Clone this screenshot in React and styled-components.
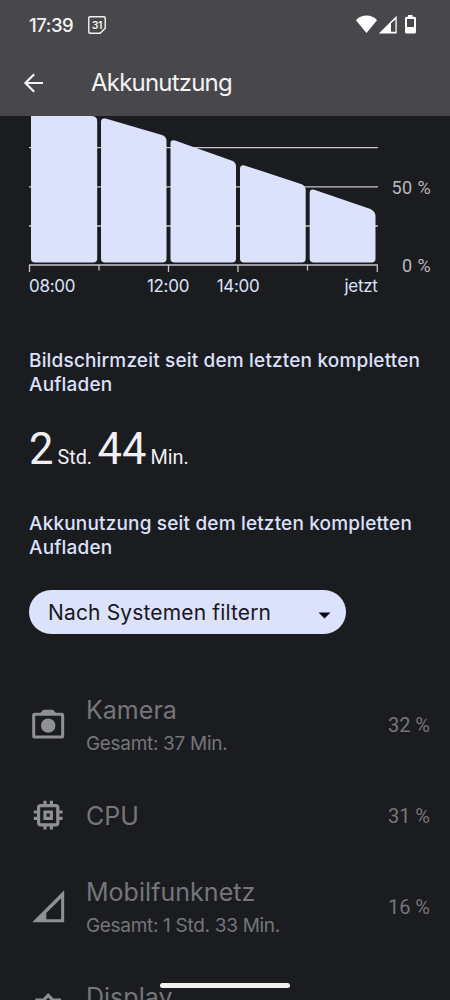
import React from "react";
import styled, { createGlobalStyle } from "styled-components";

const GlobalStyle = createGlobalStyle`
  :root {
    --bg: #1b1c20;
    --header: #48474b;
    --accent: #dce1fc;
    --muted: #75767a;
    --icon: #8f9094;
  }

  * {
    box-sizing: border-box;
  }

  body {
    margin: 0;
    background: var(--bg);
    font-family: Inter, Roboto, "Liberation Sans", sans-serif;
  }
`;

const StyledScreen = styled.div`
  position: relative;
  width: 450px;
  height: 1000px;
  overflow: hidden;
  background: var(--bg);
`;

const StyledHeader = styled.header`
  height: 116px;
  background: var(--header);
  color: #f3f3f5;
`;

const StyledStatusBar = styled.div`
  display: flex;
  align-items: center;
  height: 49px;
  padding: 0 34px 0 29px;

  svg {
    display: block;
  }
`;

const StyledClock = styled.span`
  width: 59px;
  font-size: 18.5px;
  font-weight: 500;
  letter-spacing: -0.45px;
`;

const StyledSystemIcons = styled.div`
  display: flex;
  margin-left: auto;
`;

const StyledToolbar = styled.div`
  display: flex;
  align-items: center;
  height: 67px;
  padding-left: 23px;
`;

const StyledTitle = styled.h1`
  margin: 0 0 0 47px;
  font-size: 24px;
  font-weight: 400;
  letter-spacing: -0.8px;
`;

const StyledChart = styled.svg`
  display: block;

  text {
    font-size: 17px;
    letter-spacing: -0.3px;
    fill: var(--accent);
  }

  text.percent {
    font-family: Roboto, sans-serif;
    font-size: 18px;
    letter-spacing: 0.4px;
    fill: #b9b9bf;
  }
`;

const StyledSection = styled.section`
  padding: 0 20px 0 29px;
`;

const StyledHeading = styled.h2`
  margin: ${({ $top }) => $top}px 0 0;
  color: var(--accent);
  font-size: 19px;
  font-weight: 500;
  line-height: 24px;
  letter-spacing: 0.17px;
  white-space: nowrap;
`;

const StyledDuration = styled.p`
  height: 50px;
  margin: 28px 0 0;
  color: #f0eff4;
  font-family: Roboto, sans-serif;
  font-size: 43.5px;
  line-height: 50px;
  white-space: nowrap;

  span {
    margin: 0 5.5px 0 4px;
    font-size: 19.8px;
    line-height: 1;
  }
`;

const StyledFilter = styled.button`
  display: flex;
  align-items: center;
  justify-content: space-between;
  width: 317px;
  height: 44px;
  margin-top: 30px;
  padding: 0 15px 0 19px;
  border: 0;
  border-radius: 22px;
  background: var(--accent);
  color: #17181c;
  font-family: inherit;
  font-size: 21px;
  letter-spacing: 0.15px;

  svg {
    margin-top: 7px;
  }
`;

const StyledList = styled.ul`
  margin: 38px 0 0;
  padding: 0;
  list-style: none;
`;

const StyledRow = styled.li`
  display: flex;
  align-items: center;
  height: ${({ $compact }) => ($compact ? 77 : 105)}px;
  padding: 0 20px 0 29px;
  color: var(--muted);

  > svg {
    flex: none;
    color: var(--icon);
  }
`;

const StyledRowText = styled.div`
  flex: 1;
  margin-left: 18.5px;
`;

const StyledName = styled.div`
  font-size: 25px;
  line-height: 34px;
  letter-spacing: 0.05px;
`;

const StyledTotal = styled.div`
  height: 30px;
  padding-top: 2px;
  font-size: 19px;
  line-height: 30px;
  letter-spacing: -0.3px;
`;

const StyledPercent = styled.span`
  font-family: Roboto, sans-serif;
  font-size: 20px;
`;

const StyledHomeBar = styled.div`
  position: absolute;
  left: 160px;
  bottom: 12px;
  width: 130px;
  height: 5px;
  border-radius: 3px;
  background: #f1f1ef;
`;

const RowIcon = ({ children }) => (
  <svg width='38.4' height='38.4' viewBox='0 0 24 24' fill='currentColor' fillRule='evenodd'>
    {children}
  </svg>
);

const CameraIcon = () => (
  <RowIcon>
    <path d='M9 3 7.2 4.8H3.5C2.6 4.8 2 5.4 2 6.3v13.2c0 .9.6 1.5 1.5 1.5h17c.9 0 1.5-.6 1.5-1.5V6.3c0-.9-.6-1.5-1.5-1.5h-3.7L15 3zM3.9 6.7h16.2v12.4H3.9z' />
    <circle cx='12' cy='12.9' r='4.5' />
  </RowIcon>
);

const CpuIcon = () => (
  <RowIcon>
    <path d='M15 9H9v6h6V9zm-2 4h-2v-2h2v2zm8-2V9h-2V7c0-1.100-.9-2-2-2h-2V3h-2v2h-2V3H9v2H7c-1.100 0-2 .9-2 2v2H3v2h2v2H3v2h2v2c0 1.100.9 2 2 2h2v2h2v-2h2v2h2v-2h2c1.100 0 2-.9 2-2v-2h2v-2h-2v-2h2zm-4 6H7V7h10v10z' />
  </RowIcon>
);

const NetworkIcon = () => (
  <RowIcon>
    <path d='M2 22h20V2zM20.100 20.100h-9.300v-3.800l9.300-9.300z' />
  </RowIcon>
);

const DisplayIcon = () => (
  <RowIcon>
    <path d='M20 8.690V4h-4.690L12 .690 8.690 4H4v4.690L.690 12 4 15.310V20h4.690L12 23.310 15.310 20H20v-4.690L23.310 12 20 8.690zm-2 5.790V18h-3.520L12 20.480 9.520 18H6v-3.520L3.520 12 6 9.520V6h3.520L12 3.520 14.480 6H18v3.520L20.480 12 18 14.480zM12 7a5 5 0 1 0 0 10 5 5 0 0 0 0-10z' />
  </RowIcon>
);

const bars = [
  "M31 0H91Q97.200 0 97.200 5V142.500Q97.200 146.500 93.200 146.500H35Q31 146.500 31 142.500Z",
  "M101 6Q101 1.500 105.500 2.600L162 19Q166.500 20.500 166.500 25V142.500Q166.500 146.500 162.500 146.500H105Q101 146.500 101 142.500Z",
  "M170.500 27.500Q170.500 23 175 24.500L231.500 44.500Q236 46.200 236 50.500V142.500Q236 146.500 232 146.500H174.500Q170.500 146.500 170.500 142.500Z",
  "M240 53Q240 48.500 244.500 49.500L301 68Q305.700 69.800 305.700 74V142.500Q305.700 146.500 301.700 146.500H244Q240 146.500 240 142.500Z",
  "M309.700 77Q309.700 72.500 314.200 73.700L370.500 93Q375.500 95.500 375.500 100V142.500Q375.500 146.500 371.500 146.500H313.700Q309.700 146.500 309.700 142.500Z",
];

const ticks = [
  [29.5, 156],
  [99, 154.5],
  [168.5, 156],
  [238, 156],
  [307.5, 154.5],
  [377.3, 156],
];

const BatteryChart = () => (
  <StyledChart width='450' height='184' viewBox='0 0 450 184'>
    <g stroke='#c6c6c3' strokeWidth='1.3'>
      {[31.6, 70.8, 110, 149].map((y) => (
        <line key={y} x1='29' x2='378' y1={y} y2={y} />
      ))}
      {ticks.map(([x, end]) => (
        <line key={x} x1={x} x2={x} y1='149' y2={end} />
      ))}
    </g>
    {bars.map((d) => (
      <path key={d} d={d} fill='#dce1fc' />
    ))}
    <text x='29' y='175.500'>08:00</text>
    <text x='168' y='175.500' textAnchor='middle'>12:00</text>
    <text x='238' y='175.500' textAnchor='middle'>14:00</text>
    <text x='377.500' y='175.500' textAnchor='end'>jetzt</text>
    <text className='percent' x='431' y='78' textAnchor='end'>50 %</text>
    <text className='percent' x='431' y='156' textAnchor='end'>0 %</text>
  </StyledChart>
);

const usage = [
  { name: "Kamera", total: "Gesamt: 37 Min.", percent: "32 %", Icon: CameraIcon },
  { name: "CPU", percent: "31 %", compact: true, Icon: CpuIcon },
  { name: "Mobilfunknetz", total: "Gesamt: 1 Std. 33 Min.", percent: "16 %", Icon: NetworkIcon },
  { name: "Display", Icon: DisplayIcon },
];

const Header = () => (
  <StyledHeader>
    <StyledStatusBar>
      <StyledClock>17:39</StyledClock>
      <svg width='18' height='18' viewBox='0 0 18 18' fill='none'>
        <path
          d='M2 .8h14q1.200 0 1.200 1.200v10.200l-5 5H2Q.8 17.200.8 16V2Q.8.8 2 .8z'
          stroke='#f3f3f5'
          strokeWidth='1.400'
        />
        <text x='9' y='12.500' textAnchor='middle' fontSize='10.500' fontWeight='600' letterSpacing='-0.4' fill='#f3f3f5'>31</text>
      </svg>
      <StyledSystemIcons>
        <svg width='60' height='19' viewBox='0 0 60 19' fill='#fff' fillRule='evenodd'>
          <path d='M0 5.200C2.600 2.100 6.300.6 10.500.6S18.400 2.100 21 5.200L10.500 18z' />
          <path d='M22.800 18.500H40.700V.8zM35 16.800V8.300L39.400 4.500V16.800z' />
          <path d='M52 0h4.500v1.700h2q1.500 0 1.500 1.500v13.800q0 1.500-1.500 1.500h-8q-1.500 0-1.500-1.500V3.200q0-1.500 1.500-1.500h1.500zM51 4v8h7V4z' />
        </svg>
      </StyledSystemIcons>
    </StyledStatusBar>
    <StyledToolbar>
      <svg width='21' height='20' viewBox='0 0 21 20' fill='none' stroke='#f3f3f5' strokeWidth='2.200'>
        <path d='M20 10H2.500M11.200 1.200 2.400 10l8.800 8.800' />
      </svg>
      <StyledTitle>Akkunutzung</StyledTitle>
    </StyledToolbar>
  </StyledHeader>
);

const App = () => (
  <StyledScreen>
    <GlobalStyle />
    <Header />
    <BatteryChart />
    <StyledSection>
      <StyledHeading $top={49}>
        Bildschirmzeit seit dem letzten kompletten
        <br />
        Aufladen
      </StyledHeading>
      <StyledDuration>
        2<span>Std.</span>44<span>Min.</span>
      </StyledDuration>
      <StyledHeading $top={37}>
        Akkunutzung seit dem letzten kompletten
        <br />
        Aufladen
      </StyledHeading>
      <StyledFilter>
        Nach Systemen filtern
        <svg width='13' height='7' viewBox='0 0 13 7'>
          <path d='M.5.500h12l-6 6z' fill='#0c0c0e' />
        </svg>
      </StyledFilter>
    </StyledSection>
    <StyledList>
      {usage.map(({ name, total, percent, compact, Icon }) => (
        <StyledRow key={name} $compact={compact}>
          <Icon />
          <StyledRowText>
            <StyledName>{name}</StyledName>
            {!compact && <StyledTotal>{total}</StyledTotal>}
          </StyledRowText>
          <StyledPercent>{percent}</StyledPercent>
        </StyledRow>
      ))}
    </StyledList>
    <StyledHomeBar />
  </StyledScreen>
);

export default App;
